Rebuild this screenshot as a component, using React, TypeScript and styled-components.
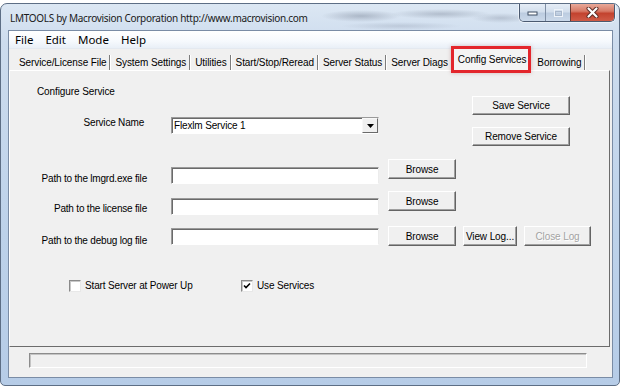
import React from 'react'
import styled, { createGlobalStyle } from 'styled-components'

const GlobalStyle = createGlobalStyle`
	html, body {
		margin: 0;
		padding: 0;
		background: #ffffff;
	}
	body {
		width: 622px;
		height: 388px;
		overflow: hidden;
		font-family: 'Liberation Sans', Arial, sans-serif;
	}
`

const Window = styled.div`
	box-sizing: border-box;
	width: 620px;
	height: 383px;
	margin-top: 3px;
	border: 1px solid #5d6e85;
	border-radius: 7px 7px 5px 5px;
	background: linear-gradient(180deg, #dce7f3 0%, #cddcee 10%, #bdd2ea 60%, #b6cce7 100%);
	display: flex;
	flex-direction: column;
	overflow: hidden;
`

const TitleBar = styled.div`
	height: 26px;
	display: flex;
	align-items: flex-start;
	background:
		radial-gradient(ellipse 40px 6px at 360px 12px, rgba(90, 100, 120, 0.35), transparent),
		radial-gradient(ellipse 50px 5px at 440px 10px, rgba(90, 100, 120, 0.3), transparent),
		radial-gradient(ellipse 30px 5px at 500px 14px, rgba(90, 100, 120, 0.25), transparent),
		radial-gradient(ellipse 60px 4px at 400px 22px, rgba(120, 130, 150, 0.25), transparent);
`

const Title = styled.div`
	margin: 7px 0 0 9px;
	font-family: 'Noto Sans', 'Open Sans', sans-serif;
	font-size: 10px;
	line-height: 14px;
	color: #1a1a1a;
	letter-spacing: -0.3px;
	white-space: nowrap;
`

const CaptionGroup = styled.div`
	margin-left: auto;
	margin-right: 4px;
	display: flex;
	border: 1px solid #4b5a70;
	border-top: none;
	border-radius: 0 0 5px 5px;
	overflow: hidden;
	height: 17px;
	box-shadow: 0 0 0 1px rgba(255, 255, 255, 0.5);
`

const CaptionButton = styled.div<{ $close?: boolean; $w: number }>`
	width: ${p => p.$w}px;
	height: 17px;
	display: flex;
	align-items: center;
	justify-content: center;
	border-left: ${p => (p.$close ? '1px solid #6b3a33' : '1px solid #7f8fa5')};
	background: ${p =>
		p.$close
			? 'linear-gradient(180deg, #e9a999 0%, #d77a67 42%, #c3432f 55%, #cf5b47 100%)'
			: 'linear-gradient(180deg, #e6edf6 0%, #d3dfed 45%, #bccce0 55%, #cbd9ea 100%)'};
	&:first-child {
		border-left: none;
	}
`

const MinIcon = () => (
	<svg width="11" height="6" viewBox="0 0 11 6">
		<rect x="1" y="2" width="9" height="3" fill="#ffffff" stroke="#3d4c62" strokeWidth="1" />
	</svg>
)

const MaxIcon = () => (
	<svg width="11" height="10" viewBox="0 0 11 10">
		<rect x="1.5" y="1.5" width="8" height="7" fill="none" stroke="#eef3f9" strokeWidth="1" />
		<rect x="2.5" y="3.5" width="6" height="4" fill="none" stroke="#a9b8cc" strokeWidth="1" />
	</svg>
)

const CloseIcon = () => (
	<svg width="13" height="11" viewBox="0 0 13 11">
		<path d="M2.5 1.5 L10.5 9.5 M10.5 1.5 L2.5 9.5" stroke="#5a2a24" strokeWidth="4" strokeLinecap="round" />
		<path d="M2.5 1.5 L10.5 9.5 M10.5 1.5 L2.5 9.5" stroke="#ffffff" strokeWidth="2.2" strokeLinecap="round" />
	</svg>
)

const Client = styled.div`
	margin: 0 6px 7px 7px;
	flex: 1;
	border: 1px solid #7a8ca5;
	display: flex;
	flex-direction: column;
	background: #f0f0f0;
`

const MenuBar = styled.div`
	height: 17px;
	display: flex;
	background: linear-gradient(180deg, #ffffff 0%, #f6f9fd 60%, #e9eff7 100%);
	border-bottom: 1px solid #e4e9f0;
`

const MenuItem = styled.div`
	padding: 0 6px;
	font-family: 'Noto Sans', 'Open Sans', sans-serif;
	font-size: 11.5px;
	line-height: 17px;
	color: #000;
`

const Body = styled.div`
	flex: 1;
	display: flex;
	flex-direction: column;
	background: #f0f0f0;
`

const TabStrip = styled.div`
	height: 21px;
	display: flex;
	align-items: flex-end;
	padding-left: 5px;
`

const Tab = styled.div<{ $active?: boolean }>`
	position: relative;
	font-size: 10px;
	letter-spacing: -0.1px;
	color: #000;
	white-space: nowrap;
	${p =>
		p.$active
			? `
		height: 21px;
		line-height: 22px;
		padding: 0 2px 0 4px;
		margin-left: 2px;
		margin-right: 4px;
		background: #f4f4f4;
		outline: 3px solid #e3262c;
		box-shadow: 0 0 4px 3px rgba(120, 20, 20, 0.25);
		z-index: 1;
	`
			: `
		height: 15px;
		line-height: 16px;
		padding: 0 3px 0 5px;
		border-right: 1px solid #7c7c7c;
		box-shadow: 1px 0 0 #ffffff;
	`}
`

const Panel = styled.div`
	box-sizing: border-box;
	height: 277px;
	margin-right: 2px;
	border-top: 1px solid #ffffff;
	border-left: 1px solid #ffffff;
	border-right: 1px solid #6c6c6c;
	border-bottom: 1px solid #6c6c6c;
	display: flex;
	flex-direction: column;
`

const TopArea = styled.div`
	display: flex;
	justify-content: space-between;
`

const ConfigCol = styled.div`
	display: flex;
	flex-direction: column;
`

const Heading = styled.div`
	margin: 15px 0 0 27px;
	font-size: 10px;
	line-height: 12px;
	letter-spacing: -0.1px;
`

const ButtonCol = styled.div`
	margin: 25px 39px 0 0;
	display: flex;
	flex-direction: column;
	gap: 12px;
`

const Row = styled.div<{ $top: number }>`
	display: flex;
	align-items: flex-start;
	margin-top: ${p => p.$top}px;
`

const Label = styled.div<{ $top?: number; $pad?: number }>`
	width: 137px;
	margin-top: ${p => p.$top ?? 0}px;
	padding-right: ${p => p.$pad ?? 0}px;
	box-sizing: border-box;
	text-align: right;
	font-size: 10px;
	line-height: 12px;
	letter-spacing: -0.2px;
	white-space: nowrap;
`

const TextBox = styled.div<{ $top?: number }>`
	box-sizing: border-box;
	width: 208px;
	height: 17px;
	margin-left: 24px;
	margin-top: ${p => p.$top ?? 0}px;
	background: #ffffff;
	border-top: 1px solid #9a9a9a;
	border-left: 1px solid #9a9a9a;
	border-right: 1px solid #ececec;
	border-bottom: 1px solid #ffffff;
	box-shadow: inset 1px 1px 0 #6a6a6a;
	display: flex;
	align-items: center;
	font-size: 10px;
	letter-spacing: -0.15px;
	padding-left: 2px;
`

const DropButton = styled.div`
	margin-left: auto;
	width: 16px;
	height: 15px;
	box-sizing: border-box;
	background: #f0f0f0;
	border-top: 1px solid #f8f8f8;
	border-left: 1px solid #f8f8f8;
	border-right: 1px solid #6a6a6a;
	border-bottom: 1px solid #6a6a6a;
	display: flex;
	align-items: center;
	justify-content: center;
`

const Button = styled.div<{ $w: number; $h?: number; $gap?: number; $disabled?: boolean }>`
	box-sizing: border-box;
	width: ${p => p.$w}px;
	height: ${p => p.$h ?? 20}px;
	margin-left: ${p => p.$gap ?? 0}px;
	background: #f0f0f0;
	border-top: 1px solid #ffffff;
	border-left: 1px solid #ffffff;
	border-right: 1px solid #646464;
	border-bottom: 1px solid #646464;
	box-shadow: inset -1px -1px 0 #a0a0a0;
	display: flex;
	align-items: center;
	justify-content: center;
	font-size: 10px;
	letter-spacing: -0.1px;
	white-space: nowrap;
	color: ${p => (p.$disabled ? '#a3a3a3' : '#000000')};
	text-shadow: ${p => (p.$disabled ? '1px 1px 0 #ffffff' : 'none')};
`

const CheckRow = styled.div`
	display: flex;
	align-items: center;
	margin: 33px 0 0 59px;
`

const CheckItem = styled.div<{ $w?: number }>`
	display: flex;
	align-items: center;
	width: ${p => (p.$w ? `${p.$w}px` : 'auto')};
`

const CheckBox = styled.div`
	box-sizing: border-box;
	width: 12px;
	height: 12px;
	background: #ffffff;
	border-top: 1px solid #8a8a8a;
	border-left: 1px solid #8a8a8a;
	border-right: 1px solid #e8e8e8;
	border-bottom: 1px solid #e8e8e8;
	box-shadow: inset 1px 1px 0 #c8c8c8;
	display: flex;
	align-items: center;
	justify-content: center;
`

const CheckLabel = styled.div`
	margin-left: 4px;
	font-size: 10px;
	line-height: 12px;
	letter-spacing: -0.15px;
	white-space: nowrap;
`

const StatusBar = styled.div`
	box-sizing: border-box;
	width: 558px;
	height: 15px;
	margin: 6px 0 0 20px;
	border-top: 1px solid #8c8c8c;
	border-left: 1px solid #8c8c8c;
	border-right: 1px solid #ffffff;
	border-bottom: 1px solid #ffffff;
	box-shadow: inset 1px 1px 0 #c4c4c4;
`

const tabs = [
	'Service/License File',
	'System Settings',
	'Utilities',
	'Start/Stop/Reread',
	'Server Status',
	'Server Diags',
	'Config Services',
	'Borrowing'
]

const paths = [
	{ label: 'Path to the lmgrd.exe file', top: 0, labelTop: 14, boxTop: 8 },
	{ label: 'Path to the license file', top: 6, labelTop: 12, boxTop: 7 },
	{ label: 'Path to the debug log file', top: 11, labelTop: 9, boxTop: 2 }
]

export default function App() {
	return (
		<>
			<GlobalStyle />
			<Window>
				<TitleBar>
					<Title>LMTOOLS by Macrovision Corporation http://www.macrovision.com</Title>
					<CaptionGroup>
						<CaptionButton $w={25}>
							<MinIcon />
						</CaptionButton>
						<CaptionButton $w={24}>
							<MaxIcon />
						</CaptionButton>
						<CaptionButton $w={43} $close>
							<CloseIcon />
						</CaptionButton>
					</CaptionGroup>
				</TitleBar>
				<Client>
					<MenuBar>
						{['File', 'Edit', 'Mode', 'Help'].map(m => (
							<MenuItem key={m}>{m}</MenuItem>
						))}
					</MenuBar>
					<Body>
						<TabStrip>
							{tabs.map(t => (
								<Tab key={t} $active={t === 'Config Services'}>
									{t}
								</Tab>
							))}
						</TabStrip>
						<Panel>
							<TopArea>
								<ConfigCol>
									<Heading>Configure Service</Heading>
									<Row $top={19}>
										<Label $pad={3}>Service Name</Label>
										<TextBox>
											Flexlm Service 1
											<DropButton>
												<svg width="7" height="4" viewBox="0 0 7 4">
													<path d="M0 0 H7 L3.5 4 Z" fill="#000" />
												</svg>
											</DropButton>
										</TextBox>
									</Row>
								</ConfigCol>
								<ButtonCol>
									<Button $w={98} $h={19}>Save Service</Button>
									<Button $w={98} $h={19}>Remove Service</Button>
								</ButtonCol>
							</TopArea>
							<Row $top={13}>
								<Label $top={paths[0].labelTop}>{paths[0].label}</Label>
								<TextBox $top={paths[0].boxTop} />
								<Button $w={68} $gap={9}>Browse</Button>
							</Row>
							<Row $top={paths[1].top}>
								<Label $top={paths[1].labelTop}>{paths[1].label}</Label>
								<TextBox $top={paths[1].boxTop} />
								<Button $w={68} $gap={9}>Browse</Button>
							</Row>
							<Row $top={paths[2].top}>
								<Label $top={paths[2].labelTop}>{paths[2].label}</Label>
								<TextBox $top={paths[2].boxTop} />
								<Button $w={68} $gap={9}>Browse</Button>
								<Button $w={54} $gap={7}>View Log...</Button>
								<Button $w={67} $gap={7} $disabled>Close Log</Button>
							</Row>
							<CheckRow>
								<CheckItem $w={172}>
									<CheckBox />
									<CheckLabel>Start Server at Power Up</CheckLabel>
								</CheckItem>
								<CheckItem>
									<CheckBox>
										<svg width="8" height="8" viewBox="0 0 8 8">
											<path d="M1 3.5 L3 5.5 L7 1.5" stroke="#000" strokeWidth="1.6" fill="none" />
										</svg>
									</CheckBox>
									<CheckLabel>Use Services</CheckLabel>
								</CheckItem>
							</CheckRow>
						</Panel>
						<StatusBar />
					</Body>
				</Client>
			</Window>
		</>
	)
}
